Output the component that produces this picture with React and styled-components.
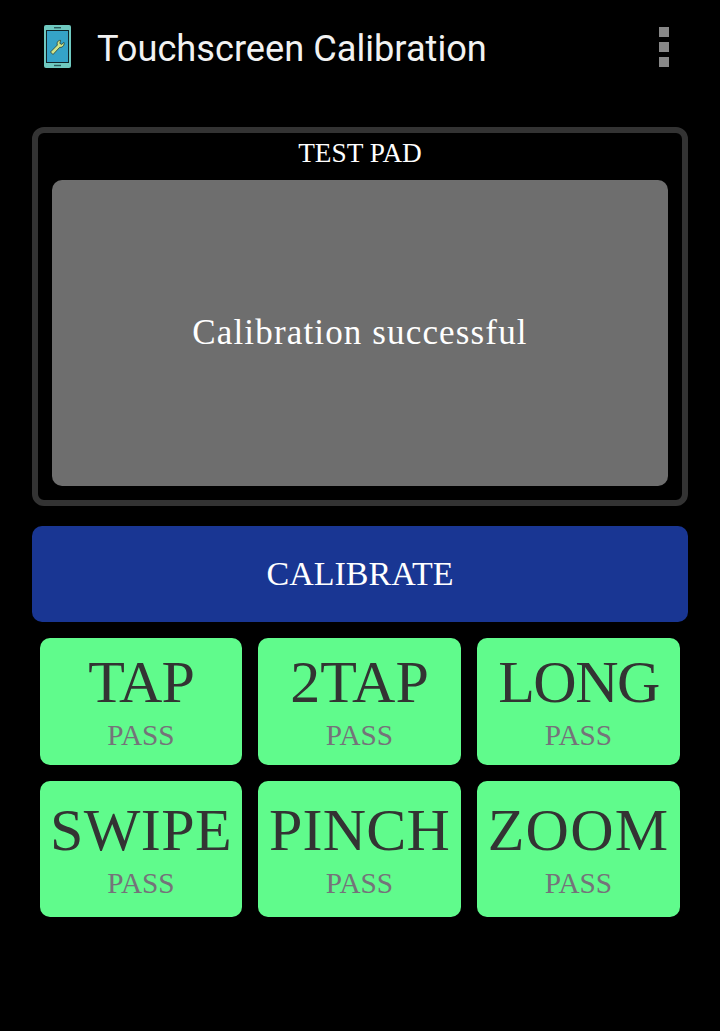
import React from "react";
import styled, { createGlobalStyle } from "styled-components";

const Global = createGlobalStyle`
  html, body { margin: 0; padding: 0; background: #000; }
  body { width: 720px; height: 1031px; overflow: hidden; }
`;

const Screen = styled.div`
  width: 720px;
  height: 1031px;
  background: #000;
  display: flex;
  flex-direction: column;
`;

const ActionBar = styled.header`
  height: 97px;
  display: flex;
  align-items: center;
  padding: 0 51px 4px 44px;
  box-sizing: border-box;
`;

const Title = styled.h1`
  flex: 1;
  margin: 4px 0 0 26px;
  font: 400 36.2px/40px Roboto, sans-serif;
  color: #f2f2f2;
`;

const Overflow = styled.div`
  display: flex;
  flex-direction: column;
  gap: 5px;
`;

const Dot = styled.span`
  width: 10px;
  height: 10px;
  background: #888;
`;

const Content = styled.main`
  padding: 30px 32px 0;
  display: flex;
  flex-direction: column;
`;

const Panel = styled.section`
  height: 379px;
  box-sizing: border-box;
  border: 6px solid #333;
  border-radius: 12px;
  padding: 0 14px 14px;
  display: flex;
  flex-direction: column;
`;

const PanelTitle = styled.div`
  height: 39px;
  margin-bottom: 8px;
  display: flex;
  align-items: center;
  justify-content: center;
  font: 400 27.3px/32px "Liberation Serif", serif;
  color: #fff;
`;

const Pad = styled.div`
  flex: 1;
  background: #6e6e6e;
  border-radius: 10px;
  display: flex;
  align-items: center;
  justify-content: center;
  font: 400 35px/40px "Liberation Serif", serif;
  letter-spacing: 1.15px;
  color: #fff;
`;

const Calibrate = styled.button`
  margin-top: 20px;
  height: 96px;
  border: 0;
  border-radius: 10px;
  background: #193693;
  color: #fff;
  font: 400 34px/40px "Liberation Serif", serif;
`;

const Grid = styled.div`
  margin-top: 16px;
  padding: 0 8px;
  display: grid;
  grid-template-columns: 202px 203px 203px;
  grid-template-rows: 127px 136px;
  column-gap: 16px;
  row-gap: 16px;
`;

const Tile = styled.div`
  background: #60fb8c;
  border-radius: 10px;
  display: flex;
  flex-direction: column;
  align-items: center;
  padding-top: ${(p) => p.$top}px;
  box-sizing: border-box;
`;

const TileName = styled.div`
  font: 400 60px/60px "Liberation Serif", serif;
  letter-spacing: ${(p) => p.$track}px;
  color: #333;
  white-space: nowrap;
`;

const TileStatus = styled.div`
  margin-top: 5px;
  font: 400 29.3px/36px "Liberation Serif", serif;
  color: #75737a;
`;

const PhoneIcon = () => (
  <svg width="27" height="43" viewBox="0 0 27 43">
    <rect x="0" y="0" width="27" height="43" rx="2" fill="#6fc9c0" />
    <rect x="2" y="5" width="23" height="33" fill="#10252b" />
    <rect x="3" y="6" width="21" height="31" fill="#35a3c8" />
    <rect x="10" y="2" width="7" height="1.4" fill="#2a5b5c" />
    <rect x="10" y="39.8" width="7" height="1.4" fill="#2a5b5c" />
    <path
      d="M6.5 27 L9 29.5 L15.6 22.4 C17.8 22.8 20 21.2 20.2 18.6 L19.8 17.4 L17.8 19.4 L15.8 18.4 L16.6 15.4 C14.2 15 12.4 17.6 13.4 20 Z"
      fill="#cfe58a"
      stroke="#1c2a20"
      strokeWidth="0.7"
      strokeLinejoin="round"
    />
  </svg>
);

const tiles = [
  ["TAP", 14, -1],
  ["2TAP", 14, 0],
  ["LONG", 14, -1.5],
  ["SWIPE", 19, 0.4],
  ["PINCH", 19, 0.2],
  ["ZOOM", 19, 1.2],
];

export default function App() {
  return (
    <Screen>
      <Global />
      <ActionBar>
        <PhoneIcon />
        <Title>Touchscreen Calibration</Title>
        <Overflow>
          <Dot />
          <Dot />
          <Dot />
        </Overflow>
      </ActionBar>
      <Content>
        <Panel>
          <PanelTitle>TEST PAD</PanelTitle>
          <Pad>Calibration successful</Pad>
        </Panel>
        <Calibrate>CALIBRATE</Calibrate>
        <Grid>
          {tiles.map(([name, top, track]) => (
            <Tile key={name} $top={top}>
              <TileName $track={track}>{name}</TileName>
              <TileStatus>PASS</TileStatus>
            </Tile>
          ))}
        </Grid>
      </Content>
    </Screen>
  );
}
